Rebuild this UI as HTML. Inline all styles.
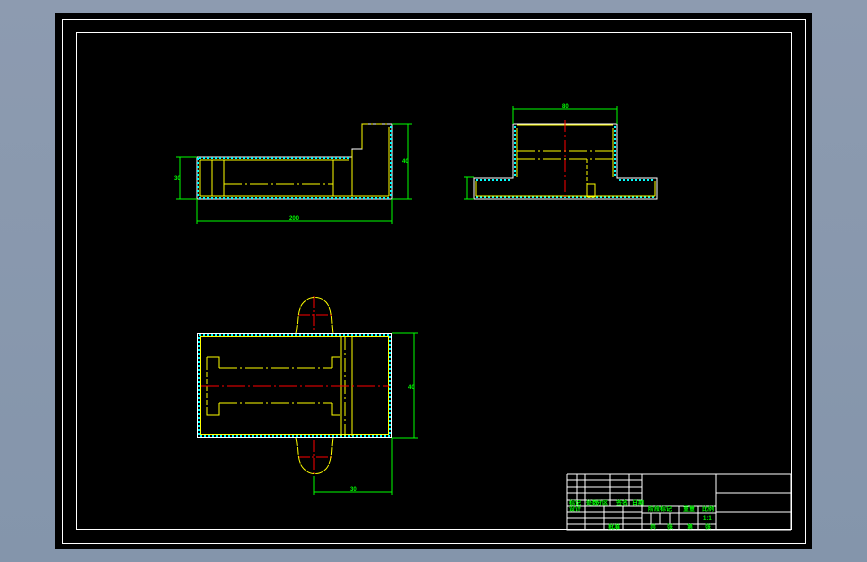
<!DOCTYPE html>
<html><head><meta charset="utf-8"><style>
html,body{margin:0;padding:0;width:867px;height:562px;overflow:hidden;background:linear-gradient(#8d9bb0,#8495ab);}
svg{position:absolute;left:0;top:0}
text{font-family:"Liberation Sans","Noto Sans CJK SC",sans-serif;fill:#00ff00;font-size:6px;font-weight:bold}
.c{shape-rendering:crispEdges}
</style></head><body>
<svg width="867" height="562" viewBox="0 0 867 562">
<rect x="55" y="13" width="757" height="536" fill="#000"/>
<g class="c">
<rect x="62.5" y="19.5" width="743" height="524" fill="none" stroke="#fff" stroke-width="1"/>
<rect x="76.5" y="32.5" width="715" height="497" fill="none" stroke="#fff" stroke-width="1"/>

<!-- View 1 -->
<g fill="none">
<path d="M197 157H352V149H362V124H392V199H197Z" stroke="#fff" stroke-width="1"/>
<path d="M199 158H350M199 198H390M198 158V198M391 126V198" stroke="#00ffff" stroke-width="2" stroke-dasharray="2 2"/>
<path d="M200 160H349M200 196H389M200 160V196M389 127V196" stroke="#ff0" stroke-width="1"/>
<path d="M212 160V196M224 160V196M333 160V196M352 150V196M362 124V149" stroke="#ff0"/>
<path d="M224 184H333" stroke="#ff0" stroke-dasharray="18 3 2 3"/>
<path d="M362 124H389" stroke="#ff0" stroke-dasharray="6 3 2 3"/>
<path d="M180 157V199M176 157H197M176 199H197M197 199V224M392 199V224M197 221H392M408 124V199M392 124H412M392 199H412" stroke="#00ff00"/>
</g>

<!-- View 2 -->
<g fill="none">
<path d="M513 178V124H617V178H657V199H474V178Z" stroke="#fff"/>
<path d="M515 126V176M615 126V176M476 180H511M619 180H655M476 197H655" stroke="#00ffff" stroke-width="2" stroke-dasharray="2 2"/>
<path d="M517 125H613M517 128V177M613 128V177M476 181V196M655 181V196M476 196H655" stroke="#ff0"/>
<path d="M517 151H614M517 159H614" stroke="#ff0" stroke-dasharray="18 3 2 3"/>
<path d="M587 159V184" stroke="#ff0" stroke-dasharray="4 2"/>
<rect x="587" y="184" width="8" height="13" stroke="#ff0"/>
<path d="M565 120V199" stroke="#f00" stroke-dasharray="12 3 2 3"/>
<path d="M513 109H617M513 106V124M617 106V124M467 177V199M464 177H474M464 199H474" stroke="#00ff00"/>
</g>

<!-- View 3 -->
<g fill="none">
<rect x="197.5" y="333.5" width="194" height="104" stroke="#fff"/>
<rect x="199" y="335" width="191" height="101" stroke="#00ffff" stroke-width="2" stroke-dasharray="2 2"/>
<rect x="200.5" y="336.5" width="188" height="98" stroke="#ff0"/>
<path d="M207 357V365M207 408V415H219V403M219 368V357H207M332 403V415H340M332 368V357H340" stroke="#ff0"/>
<path d="M207 365V408" stroke="#ff0" stroke-dasharray="5 2"/>
<path d="M219 368H332M219 403H332" stroke="#ff0" stroke-dasharray="18 3 2 3"/>
<path d="M341 336V436M352 336V436" stroke="#ff0"/>
<path d="M345 336V436" stroke="#ff0" stroke-dasharray="14 3 2 3"/>
<path d="M201 386H389" stroke="#f00" stroke-dasharray="18 3 2 3"/>
<path d="M314 296V332M314 440V476M298 315H333M298 457H333" stroke="#f00" stroke-dasharray="12 2 2 2"/>
<path d="M392 333H418M392 438H418M414 333V438M392 438V495M314 476V495M314 492H392" stroke="#00ff00"/>
</g>

<!-- Title block -->
<g stroke="#fff" fill="none" stroke-width="1">
<path d="M567 474H791V530M567 474V530H791M642 474V530M716 474V530M716 493H791M716 512H791"/>
<path d="M567 480H642M567 487H642M567 493H642M567 500H642M567 506H716M567 512H642M567 518H642M567 524H716M642 513H716"/>
<path d="M577 474V506M585 474V530M610 474V506M629 474V506M604 506V530M623 506V530"/>
<path d="M651 513V524M660 513V524M670 513V524M679 506V530M698 506V530"/>
</g>
</g>
<g fill="none">
<path d="M296 333C299 322 296 310 304 302C310 296 320 296 326 302C333 310 331 322 333 333" stroke="#ff0" stroke-dasharray="8 1"/>
<path d="M296 438C299 449 296 461 304 469C310 475 320 475 326 469C333 461 331 449 333 438" stroke="#ff0" stroke-dasharray="8 1"/>
</g>
<text x="174" y="180">30</text><text x="289" y="220">200</text><text x="402" y="163">40</text>
<text x="562" y="108">80</text>
<text x="408" y="389">40</text><text x="350" y="491">30</text>
<text x="569" y="505">标记</text><text x="586" y="505">处数</text><text x="596" y="505">分区</text>
<text x="616" y="505">签名</text><text x="632" y="505">日期</text>
<text x="569" y="511">设计</text><text x="608" y="529">批准</text>
<text x="648" y="511">阶段标记</text><text x="683" y="511">重量</text><text x="702" y="511">比例</text>
<text x="703" y="520">1:1</text>
<text x="650" y="529">共</text><text x="667" y="529">张</text><text x="687" y="529">第</text><text x="705" y="529">张</text>
</svg>
</body></html>
